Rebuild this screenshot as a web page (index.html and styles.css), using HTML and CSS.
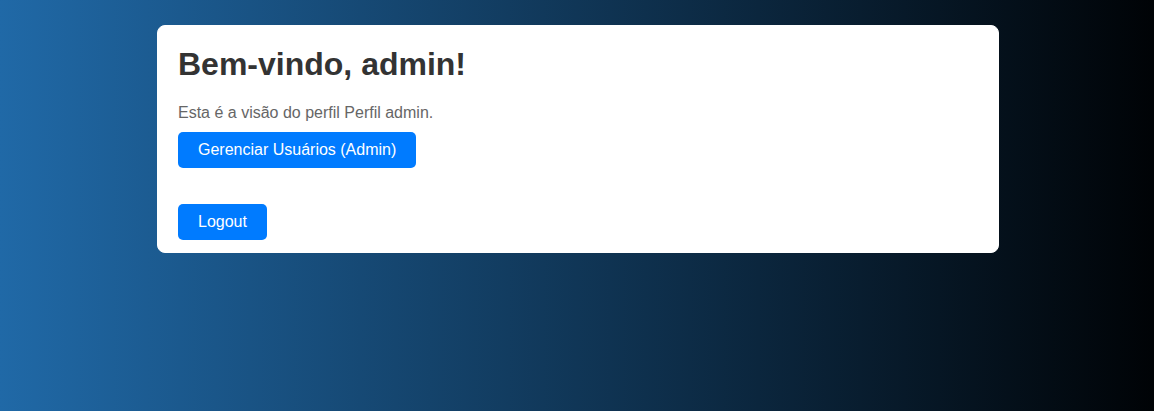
FILE: index.html
```html
<!DOCTYPE html>
<html lang="pt-BR">
<head>
<meta charset="utf-8">
<title>Painel</title>
<link rel="stylesheet" href="styles.css">
</head>
<body>
  <main class="card">
    <h1 class="title">Bem-vindo, admin!</h1>
    <p class="subtitle">Esta é a visão do perfil Perfil admin.</p>
    <div class="actions">
      <button class="btn" type="button">Gerenciar Usuários (Admin)</button>
    </div>
    <div class="logout-row">
      <button class="btn" type="button">Logout</button>
    </div>
  </main>
</body>
</html>
```
FILE: styles.css
```css
html, body {
  height: 100%;
}
body {
  margin: 0;
  padding: 25px 0 0 2px;
  box-sizing: border-box;
  background: linear-gradient(to right, #2069a7, #000306);
  font-family: "Liberation Sans", Arial, sans-serif;
}
.card {
  display: block;
  width: 800px;
  margin: 0 auto;
  background: #ffffff;
  border: 1px solid #ffffff;
  border-radius: 8px;
  padding: 20px 20px 12px;
}
.title {
  margin: 0 0 21px;
  font-size: 32px;
  font-weight: bold;
  color: #333333;
}
.subtitle {
  margin: 0 0 10px;
  font-size: 16px;
  color: #666666;
}
.btn {
  display: inline-block;
  background: #007bff;
  color: #ffffff;
  border: none;
  border-radius: 5px;
  padding: 9px 20px;
  font-size: 16px;
  font-family: inherit;
  line-height: normal;
  cursor: pointer;
}
.actions,
.logout-row {
  display: flex;
}
.logout-row {
  margin-top: 36px;
}
```
